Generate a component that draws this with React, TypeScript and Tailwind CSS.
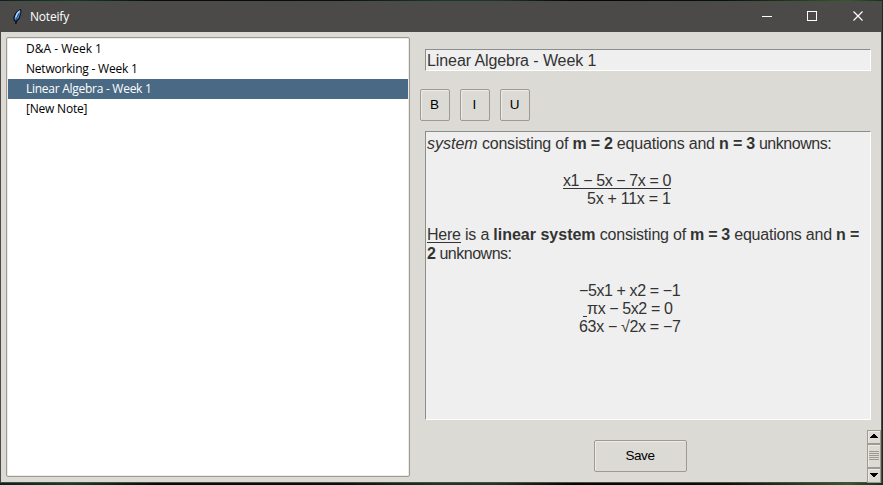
import type { ReactNode } from 'react';

const notes = [
  { title: 'D&A - Week 1', tracking: 'tracking-[0px]' },
  { title: 'Networking - Week 1', tracking: 'tracking-[-0.21px]' },
  { title: 'Linear Algebra - Week 1', tracking: 'tracking-[-0.27px]' },
  { title: '[New Note]', tracking: 'tracking-[-0.2px]' },
];
const selected = 2;

function Feather() {
  return (
    <svg width="12" height="16" viewBox="0 0 12 16" className="mt-[7px] ml-[11px] shrink-0">
      <path d="M8.6 0 L9.4 1.5 L9.2 4.5 L7.6 9.5 L5 12.4 L4.4 15 H3.2 L3.2 12.5 L1.6 11.5 L1.4 8.5 L3 4.6 L5.5 1.8 Z" fill="#080d14" />
      <path d="M8.2 1.2 L5.6 3 L3.6 6 L2.5 9.5 L3 11.3 L4.6 11.2 L6.8 8.6 L8.3 4.2 Z" fill="#4b8de0" />
      <path d="M7.8 1.8 L5.2 4.4 L3.6 8.4" stroke="#b9dcff" strokeWidth="1.3" fill="none" />
      <path d="M7.2 4.4 L5 8.4 L3.6 12.5" stroke="#16314f" strokeWidth="0.7" fill="none" />
    </svg>
  );
}

function TitleBar() {
  return (
    <header className="flex h-[30px] shrink-0 bg-[#4c4a48] text-white">
      <Feather />
      <span className="ml-[6px] mt-[6px] grow font-['Open_Sans','Noto_Sans',sans-serif] text-[12px] leading-[18px] tracking-[-0.2px]">
        Noteify
      </span>
      <svg width="120" height="30" viewBox="0 0 120 30" fill="none" stroke="white" className="shrink-0" shapeRendering="crispEdges">
        <path d="M1 14.5h10" />
        <rect x="46.5" y="9.5" width="9" height="9" />
        <path d="M92.5 9.5l9 9M101.5 9.5l-9 9" shapeRendering="auto" strokeWidth="1.2" />
      </svg>
    </header>
  );
}

function Button({ children, className }: { children: ReactNode; className: string }) {
  return (
    <button className={`rounded-[2px] border border-[#9e9a91] text-center text-black shadow-[inset_1px_1px_0_#eeebe7] ${className}`}>
      {children}
    </button>
  );
}

function Line({ children, className = 'h-[18px]' }: { children?: ReactNode; className?: string }) {
  return <div className={`whitespace-pre leading-[18px] ${className}`}>{children}</div>;
}

function ScrollBar() {
  return (
    <div className="flex h-[53px] w-[14px] flex-col border border-[#9e9a91] bg-[#dcdad5]">
      <svg width="12" height="51" viewBox="0 0 12 51" shapeRendering="crispEdges">
        <path d="M0.5 12V0.5H12M0.5 36V14.5H12M0.5 50V38.5H12" fill="none" stroke="#eeebe7" />
        <path d="M0 13h12M0 37h12" stroke="#9e9a91" strokeWidth="2" />
        <path d="M5 3h2v1h1v1h1v1h1v1H2V6h1V5h1V4h1zM2 42h8v1H9v1H8v1H7v1H5v-1H4v-1H3v-1H2z" fill="black" />
        <path d="M1 20.5h10M1 22.5h10M1 24.5h10M1 26.5h10M1 28.5h10" stroke="#9e9a91" />
      </svg>
    </div>
  );
}

export default function App() {
  return (
    <div className="h-[485px] w-[883px] overflow-hidden bg-[linear-gradient(90deg,#08241c,#123f25_8%,#050b08_18%,#07100b_38%,#173a26_50%,#1d3824_56%,#030504_65%,#06130b_82%,#315b28_96%,#12301d)] pt-px font-['Liberation_Sans',Arial,sans-serif]">
      <div className="flex h-[482px] w-[882px] flex-col border border-[#4c4a48] bg-[#dcdad5]">
        <TitleBar />
        <main className="flex min-h-0 grow">
          <ul className="ml-[5px] mt-[5px] h-[440px] w-[404px] shrink-0 rounded-[2px] border border-[#9e9a91] bg-white pt-px font-['Open_Sans','Noto_Sans',sans-serif] text-[12px] text-black shadow-[inset_0_0_0_1px_#eeebe7]">
            {notes.map((note, i) => (
              <li
                key={note.title}
                className={`mx-px h-5 pl-[18px] leading-5 ${note.tracking} ${i === selected ? 'bg-[#4a6984] text-white' : ''}`}
              >
                {note.title}
              </li>
            ))}
          </ul>
          <section className="flex min-w-0 grow flex-col">
            <div className="ml-[15px] mt-[17px] h-[22px] w-[446px] border border-t-[#8d8d8d] border-r-white border-b-white border-l-[#8d8d8d] bg-[#efefef] pl-px text-[16px] leading-[21px] tracking-[-0.09px] text-[#333]">
              Linear Algebra - Week 1
            </div>
            <div className="ml-[10px] mt-[18px] flex gap-[10px] text-[13.5px]">
              <Button className="h-8 w-[30px] pt-px pr-px">B</Button>
              <Button className="h-8 w-[30px] pt-px pr-px">I</Button>
              <Button className="h-8 w-[30px] pt-px pr-px">U</Button>
            </div>
            <div className="ml-[15px] mt-[10px] h-[289px] w-[446px] shrink-0 border border-t-[#8d8d8d] border-r-white border-b-white border-l-[#8d8d8d] bg-[#efefef] pl-px pt-[3px] text-[16px] text-[#333]">
              <Line className="h-[19px] tracking-[-0.2px]">
                <i className="tracking-normal">system</i> consisting of <b className="tracking-[-0.25px]">m = 2</b> equations and <b>n = 3</b>
                <span className="tracking-[-0.48px]"> unknowns:</span>
              </Line>
              <Line />
              <Line className="ml-[136px] h-[18px] tracking-[-0.4px]">
                <span className="inline-block h-[17px] border-b border-[#333] align-top">x1 − 5x − 7x = 0</span>
              </Line>
              <Line className="ml-[160px] h-[18px] tracking-[-0.27px]">5x + 11x = 1</Line>
              <Line />
              <Line className="h-[19px] tracking-[-0.22px]">
                <span className="inline-block h-[17px] border-b border-[#333] align-top">Here</span> is a <b className="tracking-normal">linear system</b> consisting of <b className="tracking-[-0.3px]">m = 3</b> equations and <b>n =</b>
              </Line>
              <Line className="h-[19px] tracking-[-0.48px]">
                <b>2</b> unknowns:
              </Line>
              <Line />
              <Line className="ml-[152px] h-[18px] tracking-[-0.4px]">−5x1 + x2 = −1</Line>
              <Line className="ml-[156px] h-[18px] tracking-[-0.4px]">
                <span className="inline-block h-[17px] w-1 border-b border-[#333] align-top" />πx − 5x2 = 0
              </Line>
              <Line className="ml-[152px] h-[18px] tracking-[-0.33px]">63x − √2x = −7</Line>
            </div>
            <div className="flex grow">
              <Button className="ml-[184px] mt-5 h-8 w-[93px] pr-px text-[13.5px] tracking-[-0.4px]">Save</Button>
              <div className="ml-[180px] mt-[10px]">
                <ScrollBar />
              </div>
            </div>
          </section>
        </main>
      </div>
    </div>
  );
}
